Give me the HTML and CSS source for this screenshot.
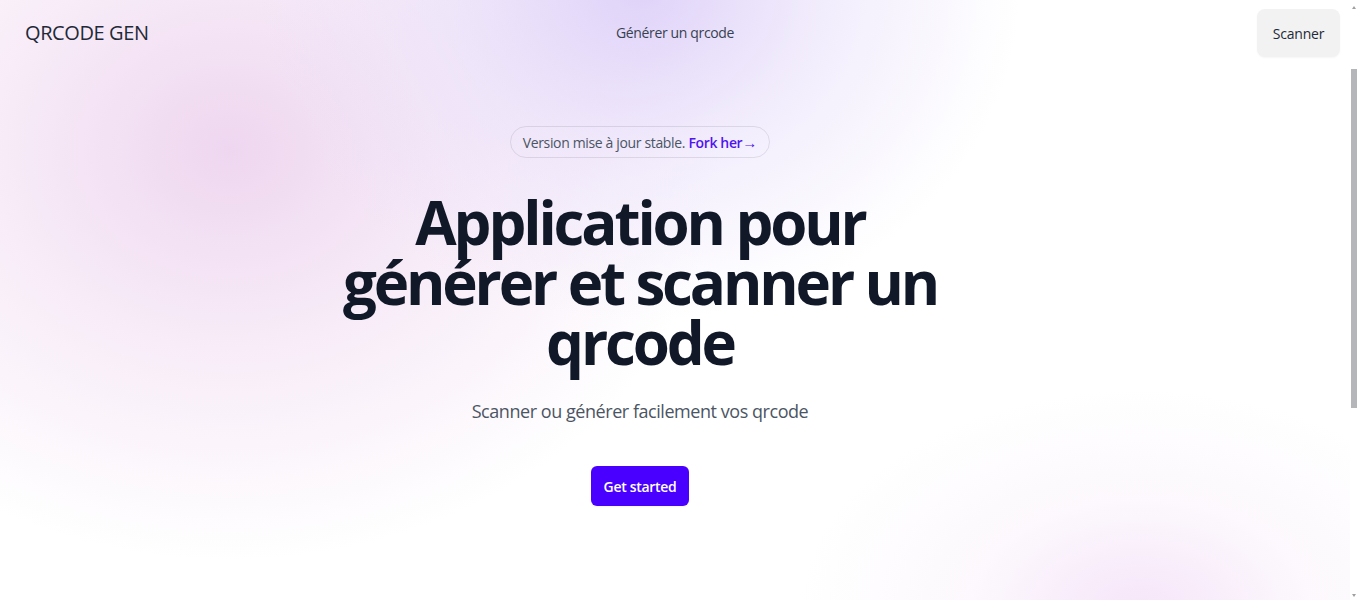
FILE: index.html
```html
<!DOCTYPE html>
<html lang="fr">
<head>
<meta charset="utf-8">
<title>QRCODE GEN</title>
<link rel="stylesheet" href="styles.css">
</head>
<body>
<div class="page">
  <div class="glow glow-pink"></div>
  <div class="glow glow-lav"></div>
  <div class="glow glow-br"></div>
  <header class="nav">
    <div class="nav-left"><a class="logo" href="#">QRCODE GEN</a></div>
    <div class="nav-mid"><a class="nav-link" href="#">Générer un qrcode</a></div>
    <div class="nav-right"><a class="btn-scan" href="#">Scanner</a></div>
  </header>
  <main class="hero">
    <div class="hero-inner">
      <div class="badge">Version mise à jour stable. <a class="badge-link" href="#">Fork her<span class="arrow">→</span></a></div>
      <h1 class="title"><span class="line">Application pour</span><span class="line">générer et scanner un</span><span class="line">qrcode</span></h1>
      <p class="subtitle">Scanner ou générer facilement vos qrcode</p>
      <div class="actions"><a class="btn-primary" href="#">Get started</a></div>
    </div>
  </main>
</div>
<div class="scrollbar">
  <span class="arrow-up"></span>
  <span class="thumb"></span>
  <span class="arrow-down"></span>
</div>
</body>
</html>
```
FILE: styles.css
```css
html, body {
  margin: 0;
  padding: 0;
  height: 100%;
  overflow: hidden;
  background: #ffffff;
}
body {
  font-family: "Open Sans", "Noto Sans", sans-serif;
  color: #111827;
}
a { text-decoration: none; color: inherit; }

.page {
  position: relative;
  width: 1350px;
  height: 600px;
  overflow: hidden;
  background: #ffffff;
}

.glow {
  position: absolute;
  border-radius: 50%;
  pointer-events: none;
}
.glow-pink {
  left: -260px;
  top: -260px;
  width: 980px;
  height: 820px;
  background: radial-gradient(closest-side, rgba(234, 204, 236, 0.8), rgba(240, 218, 241, 0.55) 45%, rgba(255, 255, 255, 0) 100%);
}
.glow-lav {
  left: 260px;
  top: -340px;
  width: 760px;
  height: 660px;
  background: radial-gradient(closest-side, rgba(220, 206, 248, 0.9), rgba(230, 220, 250, 0.5) 50%, rgba(255, 255, 255, 0) 100%);
}
.glow-br {
  left: 800px;
  top: 390px;
  width: 680px;
  height: 440px;
  background: radial-gradient(closest-side, rgba(243, 222, 247, 0.8), rgba(248, 238, 250, 0.4) 50%, rgba(255, 255, 255, 0) 100%);
}

.nav {
  position: relative;
  display: flex;
  align-items: center;
  height: 66px;
  padding: 0 32px;
}
.nav-left, .nav-right { flex: 1; display: flex; }
.nav-right { justify-content: flex-end; }
.logo {
  margin-left: -7px;
  font-size: 20px;
  letter-spacing: -0.4px;
  color: #1f2937;
  line-height: 28px;
}
.nav-link {
  font-size: 14px;
  letter-spacing: -0.35px;
  line-height: 24px;
  color: #374151;
}
.btn-scan {
  margin-right: -22px;
  display: flex;
  align-items: center;
  justify-content: center;
  width: 83px;
  height: 48px;
  border-radius: 8px;
  background: #f2f2f2;
  box-shadow: 0 1px 2px rgba(0, 0, 0, 0.04);
  font-size: 14px;
  font-weight: 500;
  letter-spacing: -0.2px;
  color: #1f2937;
}

.hero {
  position: relative;
  width: 1280px;
}
.hero-inner {
  display: flex;
  flex-direction: column;
  align-items: center;
  padding-top: 60px;
}
.badge {
  box-sizing: border-box;
  display: flex;
  align-items: center;
  height: 32px;
  padding: 0 12px;
  border: 1px solid rgba(17, 24, 39, 0.1);
  border-radius: 999px;
  font-size: 14px;
  letter-spacing: -0.35px;
  color: #4b5563;
  white-space: pre;
}
.badge-link {
  font-weight: 600;
  color: #4f14f0;
}
.arrow {
  font-size: 15px;
  font-weight: 400;
  letter-spacing: 0;
}
.title {
  margin: 34px 0 0;
  display: flex;
  flex-direction: column;
  align-items: center;
  text-align: center;
  font-size: 60px;
  line-height: 60px;
  font-weight: 700;
  letter-spacing: -0.052em;
  color: #111827;
}
.line {
  display: block;
  height: 60px;
}
.subtitle {
  margin: 23px 0 0;
  font-size: 18px;
  line-height: 32px;
  letter-spacing: -0.45px;
  color: #4b5563;
}
.actions {
  margin-top: 39px;
  display: flex;
}
.btn-primary {
  display: flex;
  align-items: center;
  justify-content: center;
  width: 98px;
  height: 40px;
  border-radius: 6px;
  background: #4a00ff;
  color: #ffffff;
  font-size: 14px;
  font-weight: 600;
  letter-spacing: -0.3px;
  box-shadow: 0 1px 2px rgba(0, 0, 0, 0.05);
}

.scrollbar {
  position: fixed;
  top: 0;
  right: 0;
  width: 7px;
  height: 600px;
  background: #ffffff;
}
.thumb {
  position: absolute;
  left: 1px;
  top: 69px;
  width: 6px;
  height: 339px;
  background: #b4b6ba;
}
.arrow-up {
  position: absolute;
  top: 6px;
  right: 1px;
  width: 0;
  height: 0;
  border-left: 2px solid transparent;
  border-right: 2px solid transparent;
  border-bottom: 3px solid #a0a0a0;
}
.arrow-down {
  position: absolute;
  bottom: 3px;
  right: 1px;
  width: 0;
  height: 0;
  border-left: 2px solid transparent;
  border-right: 2px solid transparent;
  border-top: 3px solid #a0a0a0;
}
```
